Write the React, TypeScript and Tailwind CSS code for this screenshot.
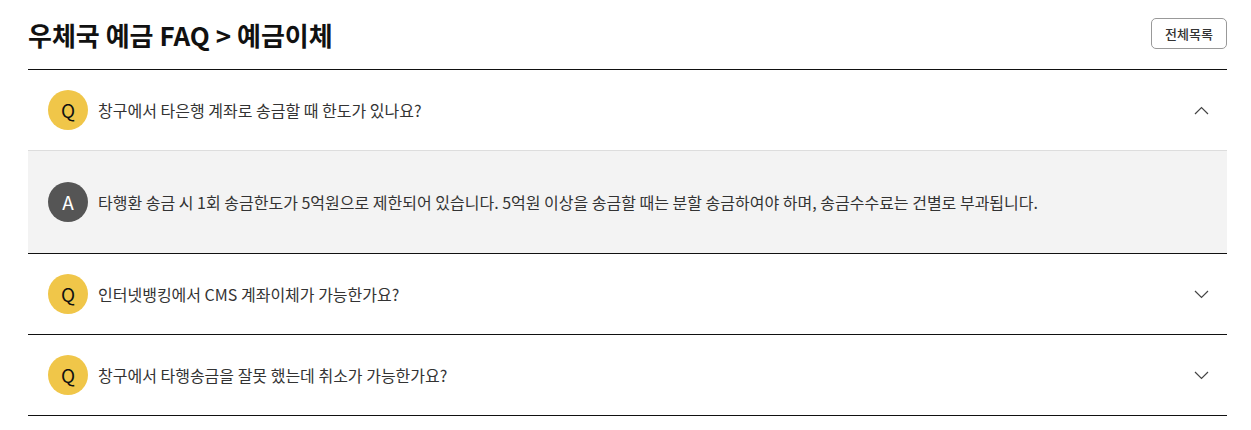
import { useState } from "react";

const FAQS = [
  {
    q: "창구에서 타은행 계좌로 송금할 때 한도가 있나요?",
    a: "타행환 송금 시 1회 송금한도가 5억원으로 제한되어 있습니다. 5억원 이상을 송금할 때는 분할 송금하여야 하며, 송금수수료는 건별로 부과됩니다.",
  },
  {
    q: "인터넷뱅킹에서 CMS 계좌이체가 가능한가요?",
    a: "인터넷뱅킹에서는 CMS 계좌이체를 이용하실 수 있습니다.",
  },
  {
    q: "창구에서 타행송금을 잘못 했는데 취소가 가능한가요?",
    a: "이미 처리된 타행송금은 취소가 어려우며, 반환 청구 절차를 이용하셔야 합니다.",
  },
];

function Chevron({ up }: { up: boolean }) {
  return (
    <svg width="15" height="9" viewBox="0 0 15 9" fill="none" className="shrink-0">
      <path
        d={up ? "M1 8L7.5 1.5L14 8" : "M1 1L7.5 7.5L14 1"}
        stroke="#444"
        strokeWidth="1.2"
      />
    </svg>
  );
}

export default function App() {
  const [open, setOpen] = useState(0);

  return (
    <div
      className="w-[1251px] h-[430px] bg-white pl-[28px] pr-[24px] pt-[18px] text-[#333]"
      style={{ fontFamily: '"Noto Sans CJK KR", "Noto Sans", sans-serif' }}
    >
      <div className="flex items-start justify-between h-[52px] border-b border-[#111]">
        <h1 className="text-[26px] font-bold text-[#111] leading-[34px]">
          우체국 예금 FAQ &gt; 예금이체
        </h1>
        <button className="h-[31px] w-[76px] border border-[#999] rounded-[5px] text-[13px] font-medium text-[#333] leading-none">
          전체목록
        </button>
      </div>

      <ul>
        {FAQS.map((f, i) => (
          <li key={i} className="border-b border-[#111]">
            <button
              onClick={() => setOpen(open === i ? -1 : i)}
              className="w-full h-[80px] flex items-center pl-[20px] pr-[18px] text-left"
            >
              <span className="w-[40px] h-[40px] rounded-full bg-[#f0c649] flex items-center justify-center text-[19px] text-[#111] shrink-0">
                Q
              </span>
              <span className="ml-[10px] flex-1 text-[16px] text-[#333]">{f.q}</span>
              <Chevron up={open === i} />
            </button>
            {open === i && (
              <div className="h-[103px] bg-[#f3f3f3] border-t border-[#ddd] flex items-center pl-[20px] pr-[18px]">
                <span className="w-[40px] h-[40px] rounded-full bg-[#555] flex items-center justify-center text-[19px] text-white shrink-0">
                  A
                </span>
                <span className="ml-[10px] text-[16px] text-[#333]">{f.a}</span>
              </div>
            )}
          </li>
        ))}
      </ul>
    </div>
  );
}
